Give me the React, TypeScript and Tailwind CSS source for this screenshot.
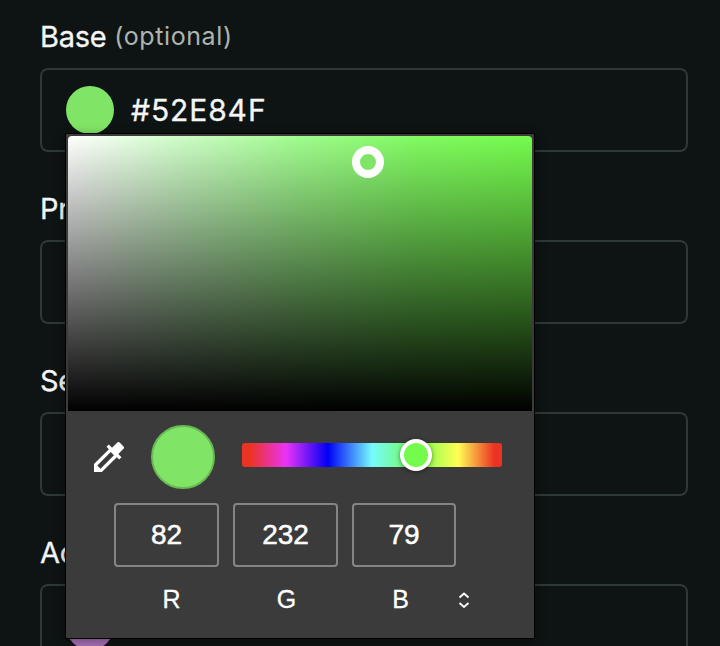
import { MdColorize } from "react-icons/md";

type FieldProps = { label: string; optional?: boolean; value?: string; swatch?: string };

function Field({ label, optional, value, swatch }: FieldProps) {
  return (
    <div className="flex h-[172px] flex-col">
      <div className="flex h-[68px] items-center gap-[8px] pb-[4px] pt-[10px] whitespace-nowrap">
        <span className="text-[29px] leading-9 tracking-[-0.3px] text-[#f4f5f5] [-webkit-text-stroke:0.3px_#f4f5f5]">{label}</span>
        {optional && <span className="pb-[2px] text-[25px] leading-9 tracking-[0.6px] text-[#adb4b2]">(optional)</span>}
      </div>
      <div className="flex h-[84px] shrink-0 items-center gap-[17px] rounded-lg border-2 border-[#2d3837] pl-6">
        {swatch && <div className={`size-12 rounded-full ${swatch}`} />}
        {value && (
          <span className="text-[30px] tracking-[0.9px] text-[#f4f5f5] [-webkit-text-stroke:0.3px_#f4f5f5]">{value}</span>
        )}
      </div>
    </div>
  );
}

function ChannelInput({ value, width }: { value: string; width: string }) {
  return (
    <div
      className={`flex h-16 items-center justify-center rounded-[4px] border-2 border-[#858585] text-[28px] tracking-[-0.1px] [-webkit-text-stroke:0.5px_white] ${width}`}
    >
      {value}
    </div>
  );
}

function ColorPicker() {
  return (
    <div className="absolute left-[65px] top-[133px] h-[506px] w-[470px] border border-black bg-[#3b3b3b] p-[2px] font-['Liberation_Sans',Arial,sans-serif] text-white shadow-[0_2px_10px_rgba(0,0,0,0.35)]">
      <div className="relative h-[275px] rounded-t-[4px] bg-[linear-gradient(to_top,#000,transparent),linear-gradient(to_right,#fff,#ccfdc5_25%,#a1fc8e_50%,#81fb61_75%,#75fb4c)]">
        <div className="absolute left-[284px] top-[10px] size-8 rounded-full border-8 border-white bg-[#80e566]" />
      </div>
      <div className="flex h-[92px] items-center pl-[21px]">
        <MdColorize className="size-10 shrink-0" />
        <div className="ml-[22px] size-16 shrink-0 rounded-full border-2 border-[#68b953] bg-[#80e566]" />
        <div className="relative -top-[2px] ml-[27px] h-6 w-[260px] rounded-[3px] bg-[linear-gradient(to_right,#eb3323_0%,#eb3323_3%,#ea33f7_17%,#0000f5_33%,#75fbfd_50%,#75fb4c_67%,#ffff54_83%,#eb3323_97%,#eb3323_100%)]">
          <div className="absolute left-[158px] -top-1 size-8 rounded-full border-4 border-white bg-[#75fb4c] shadow-[0_1px_5px_rgba(0,0,0,0.45)]" />
        </div>
      </div>
      <div className="flex gap-[14px] pl-[46px]">
        <ChannelInput value="82" width="w-[105px]" />
        <ChannelInput value="232" width="w-[105px]" />
        <ChannelInput value="79" width="w-[104px]" />
      </div>
      <div className="mt-[17px] flex h-8 items-center pl-[46px] text-center text-[25px] [-webkit-text-stroke:0.3px_white]">
        <span className="w-[115px]">R</span>
        <span className="w-[115px]">G</span>
        <span className="w-[113px]">B</span>
        <svg className="size-4 shrink-0" viewBox="0 0 16 16" fill="none" stroke="white" strokeWidth="1.8">
          <path d="M2.5 5.5 7 1.5l4.5 4M2.5 11 7 15l4.5-4" />
        </svg>
      </div>
    </div>
  );
}

export default function App() {
  return (
    <main className="relative h-[646px] w-[720px] overflow-hidden bg-[#0e1413] pl-10 pr-8 font-[Inter,sans-serif]">
      <Field label="Base" optional value="#52E84F" swatch="bg-[#80e566]" />
      <Field label="Primary" />
      <Field label="Secondary" />
      <Field label="Accent" swatch="bg-[#a56fb5]" />
      <ColorPicker />
    </main>
  );
}
